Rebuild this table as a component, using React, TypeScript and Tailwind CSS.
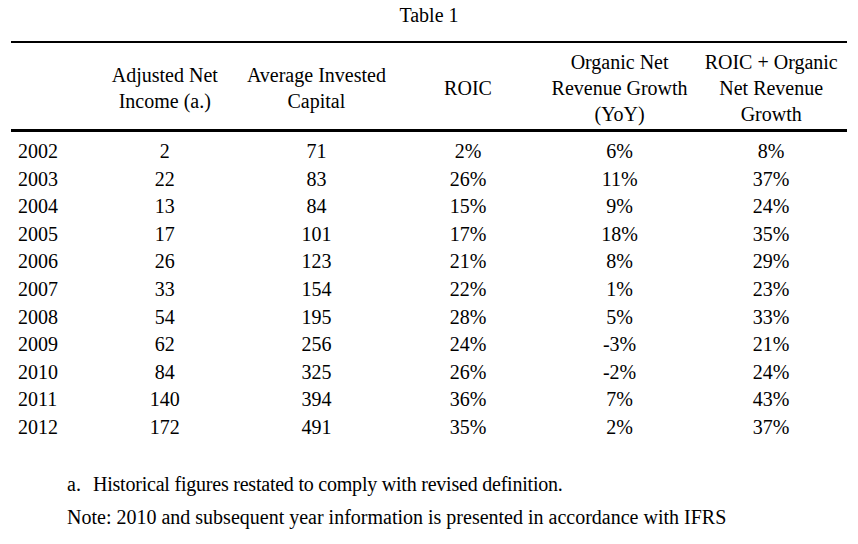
const rows: [string, string, string, string, string, string][] = [
  ['2002', '2', '71', '2%', '6%', '8%'],
  ['2003', '22', '83', '26%', '11%', '37%'],
  ['2004', '13', '84', '15%', '9%', '24%'],
  ['2005', '17', '101', '17%', '18%', '35%'],
  ['2006', '26', '123', '21%', '8%', '29%'],
  ['2007', '33', '154', '22%', '1%', '23%'],
  ['2008', '54', '195', '28%', '5%', '33%'],
  ['2009', '62', '256', '24%', '-3%', '21%'],
  ['2010', '84', '325', '26%', '-2%', '24%'],
  ['2011', '140', '394', '36%', '7%', '43%'],
  ['2012', '172', '491', '35%', '2%', '37%'],
];

const headers = [
  ['Adjusted Net', 'Income (a.)'],
  ['Average Invested', 'Capital'],
  ['ROIC'],
  ['Organic Net', 'Revenue Growth', '(YoY)'],
  ['ROIC + Organic', 'Net Revenue', 'Growth'],
];

export default function App() {
  return (
    <div className="w-[858px] h-[544px] bg-white text-black text-[20px] leading-[26px] font-['Liberation_Serif','Times_New_Roman',serif]">
      <p className="pt-[2px] text-center">Table 1</p>

      <div className="mx-[11px] mt-[13px] border-t-2 border-black">
        {/* header */}
        <div className="grid grid-cols-[78px_repeat(5,1fr)] items-center pt-[6px] pb-[2px] border-b-[3px] border-black">
          <div />
          {headers.map((h, i) => (
            <div key={i} className="text-center">
              {h.map((line) => (
                <div key={line}>{line}</div>
              ))}
            </div>
          ))}
        </div>

        {/* body */}
        <div className="pt-[6px]">
          {rows.map((r) => (
            <div key={r[0]} className="grid grid-cols-[78px_repeat(5,1fr)] leading-[27.6px]">
              <div className="pl-[7px]">{r[0]}</div>
              {r.slice(1).map((v, i) => (
                <div key={i} className="text-center">
                  {v}
                </div>
              ))}
            </div>
          ))}
        </div>
      </div>

      <div className="mt-[29px] pl-[67px]">
        <p className="flex">
          <span className="w-[26px]">a.</span>
          <span className="tracking-[-0.22px]">Historical figures restated to comply with revised definition.</span>
        </p>
        <p className="mt-[7px]">
          Note: 2010 and subsequent year information is presented in accordance with IFRS
        </p>
      </div>
    </div>
  );
}
